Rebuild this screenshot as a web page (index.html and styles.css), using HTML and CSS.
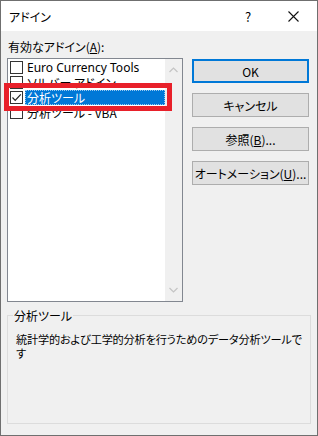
FILE: index.html
```html
<!DOCTYPE html>
<html>

<head>
    <meta charset="UTF-8">
    <title>アドイン</title>
    <link rel="stylesheet" href="styles.css">
</head>

<body>
    <div class="window">
        <div class="titlebar">
            <span class="title">アドイン</span>
            <span class="help">?</span>
            <span class="close">
                <svg width="11" height="11" viewBox="0 0 11 11">
                    <path d="M0.5 0.5 L10.5 10.5 M10.5 0.5 L0.5 10.5" stroke="#111" stroke-width="1.1" fill="none"/>
                </svg>
            </span>
        </div>

        <div class="content">
            <div class="main">
                <div class="left">
                    <div class="label">有効なアドイン(<u>A</u>):</div>
                    <div class="listwrap">
                        <div class="listbox">
                            <ul class="items">
                                <li class="item">
                                    <span class="check"></span>
                                    <span class="name latin">Euro Currency Tools</span>
                                </li>
                                <li class="item">
                                    <span class="check"></span>
                                    <span class="name">ソルバー アドイン</span>
                                </li>
                                <li class="item selected">
                                    <span class="check">
                                        <svg width="11" height="11" viewBox="0 0 11 11">
                                            <path d="M1.5 5.5 L4.2 8.3 L9.8 2.3" stroke="#222" stroke-width="1.2" fill="none"/>
                                        </svg>
                                    </span>
                                    <span class="name">分析ツール</span>
                                </li>
                                <li class="item">
                                    <span class="check"></span>
                                    <span class="name">分析ツール - VBA</span>
                                </li>
                            </ul>
                            <div class="scrollbar">
                                <svg width="9" height="6" viewBox="0 0 9 6">
                                    <path d="M0.5 5 L4.5 1 L8.5 5" stroke="#c4c4c4" stroke-width="1.2" fill="none"/>
                                </svg>
                                <svg width="9" height="6" viewBox="0 0 9 6">
                                    <path d="M0.5 1 L4.5 5 L8.5 1" stroke="#c4c4c4" stroke-width="1.2" fill="none"/>
                                </svg>
                            </div>
                        </div>
                        <div class="highlight-box"></div>
                    </div>
                </div>

                <div class="buttons">
                    <button class="btn default">OK</button>
                    <button class="btn">キャンセル</button>
                    <button class="btn">参照(<u>B</u>)...</button>
                    <button class="btn">オートメーション(<u>U</u>)...</button>
                </div>
            </div>

            <fieldset class="group">
                <legend>分析ツール</legend>
                <p class="desc">統計学的および工学的分析を行うためのデータ分析ツールです</p>
            </fieldset>
        </div>
    </div>
</body>

</html>
```

FILE: styles.css
```css
* {
    box-sizing: border-box;
}

body {
    margin: 0;
    font-family: "Noto Sans CJK JP", sans-serif;
    font-size: 12px;
    color: #000;
    background: #fff;
}

.window {
    width: 318px;
    height: 436px;
    border: 1px solid #6f6f6f;
    background: #f0f0f0;
    display: flex;
    flex-direction: column;
}

.titlebar {
    height: 30px;
    background: #fff;
    display: flex;
    align-items: center;
    padding-left: 8px;
    flex-shrink: 0;
}

.title {
    flex: 1;
    font-size: 12px;
    font-feature-settings: "palt";
}

.help {
    width: 20px;
    margin-right: 30px;
    font-size: 13px;
    text-align: center;
}

.close {
    width: 11px;
    height: 11px;
    margin-right: 18px;
    display: flex;
}

.content {
    flex: 1;
    padding: 8px 6px 0 6px;
    display: flex;
    flex-direction: column;
}

.main {
    display: flex;
    gap: 9px;
}

.left {
    width: 176px;
}

.label {
    height: 16px;
    line-height: 16px;
    margin-left: 1px;
    font-feature-settings: "palt";
}

.listwrap {
    position: relative;
    margin-top: 3px;
}

.listbox {
    height: 244px;
    border: 1px solid #828790;
    background: #fff;
    display: flex;
}

.items {
    list-style: none;
    margin: 0;
    padding: 1px 0 0 0;
    flex: 1;
}

.item {
    height: 15px;
    display: flex;
    align-items: center;
    padding-left: 2px;
}

.check {
    width: 13px;
    height: 13px;
    border: 1px solid #333;
    background: #fff;
    display: flex;
    align-items: center;
    justify-content: center;
    flex-shrink: 0;
}

.name {
    margin-left: 2px;
    padding: 0 2px;
    height: 15px;
    line-height: 15px;
    white-space: nowrap;
    font-feature-settings: "palt";
}

.latin {
    font-family: "Noto Sans", "Noto Sans CJK JP", sans-serif;
}

.selected .name {
    flex: 1;
    background: #0078d7;
    color: #fff;
    outline: 1px dotted #99c9ef;
    outline-offset: -1px;
}

.scrollbar {
    width: 17px;
    background: #f0f0f0;
    display: flex;
    flex-direction: column;
    justify-content: space-between;
    align-items: center;
    padding: 8px 0 8px 0;
}

.highlight-box {
    position: absolute;
    left: -3px;
    top: 25px;
    width: 168px;
    height: 28px;
    border: 5px solid #e8202a;
}

.buttons {
    width: 117px;
    margin-top: 20px;
    display: flex;
    flex-direction: column;
    gap: 10px;
}

.btn {
    height: 24px;
    font-family: "Noto Sans CJK JP", sans-serif;
    font-size: 12px;
    font-feature-settings: "palt";
    background: #e1e1e1;
    border: 1px solid #adadad;
    padding: 0;
    color: #000;
}

.btn.default {
    border: 2px solid #0078d7;
}

.group {
    margin: 5px 0 0 0;
    height: 117px;
    border: 1px solid #dcdcdc;
    padding: 0 2px 0 8px;
}

.group legend {
    padding: 0 1px;
    margin-left: -3px;
    font-feature-settings: "palt";
}

.desc {
    margin: 8px 0 0 0;
    font-size: 11.2px;
    letter-spacing: -0.2px;
    line-height: 14px;
    font-feature-settings: "palt";
}
```
